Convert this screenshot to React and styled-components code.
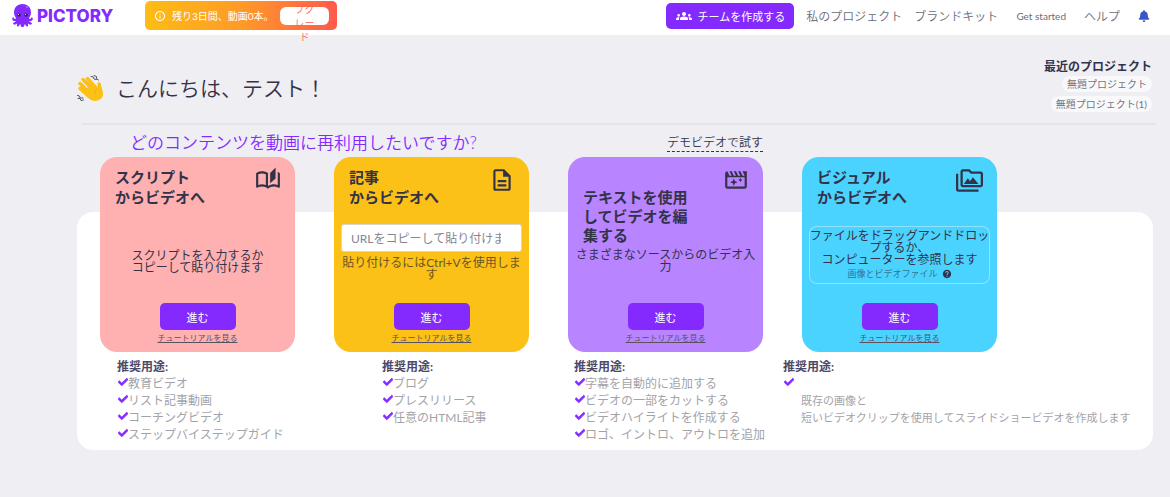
import styled, { createGlobalStyle } from 'styled-components';
import {
  MdGroups,
  MdOutlineInfo,
  MdOutlineAutoStories,
  MdHelp,
} from 'react-icons/md';
import { FaBell, FaCheck } from 'react-icons/fa';

const GlobalStyle = createGlobalStyle`
  * {
    box-sizing: border-box;
  }
  body {
    margin: 0;
    background: #efeef3;
    color: #343248;
    font-family: Lato, 'Noto Sans CJK JP', sans-serif;
    font-size: 12px;
  }
  button, input {
    font-family: inherit;
  }
  a {
    color: inherit;
    text-decoration: none;
  }
  h1, h2, h3, h4, p, ul {
    margin: 0;
    padding: 0;
  }
`;

const Header = styled.header`
  display: flex;
  align-items: center;
  height: 35px;
  padding: 0 20px 4px 12px;
  background: #fff;
`;

const Logo = styled.a`
  display: flex;
  align-items: center;
  gap: 4px;
  width: 133px;
  color: #842aff;
  font-family: Inter, sans-serif;
  font-size: 17px;
  font-weight: 800;
  line-height: 24px;
`;

const TrialBanner = styled.div`
  display: flex;
  align-items: center;
  height: 29px;
  width: 192px;
  padding: 0 8px 0 9px;
  border-radius: 5px;
  background: linear-gradient(90deg, #fcbd14, #ff9a28 50%, #ff5a4c);
  color: #fff;
  font-size: 10px;
  svg {
    margin-right: 6px;
  }
`;

const UpgradeButton = styled.button`
  display: flex;
  justify-content: center;
  align-items: center;
  width: 49px;
  height: 18px;
  margin-left: auto;
  padding: 0;
  border: 0;
  border-radius: 6px;
  background: #fff;
  color: #ff5f4c;
  font-size: 10px;
  font-weight: 350;
  line-height: 14px;
  white-space: pre;
`;

const Nav = styled.nav`
  display: flex;
  align-items: center;
  margin-left: auto;
  color: #6c6c76;
  white-space: nowrap;
`;

const TeamButton = styled.button`
  display: flex;
  align-items: center;
  justify-content: center;
  gap: 6px;
  height: 26px;
  width: 128px;
  margin-right: 12px;
  padding: 0;
  border: 0;
  border-radius: 5px;
  background: #842aff;
  color: #fff;
  font-size: 11px;
`;

const NavLink = styled.a`
  margin-right: ${(p) => p.$gap || 18}px;
  font-size: ${(p) => (p.$small ? 10 : 12)}px;
  font-weight: ${(p) => (p.$small ? 400 : 350)};
`;

const Main = styled.main`
  padding: 22px 14px 0 77px;
`;

const Greeting = styled.div`
  display: flex;
  align-items: flex-start;
  justify-content: space-between;
  height: 66px;
`;

const Hello = styled.h1`
  display: flex;
  align-items: center;
  gap: 12px;
  padding-top: 15px;
  font-size: 21px;
  font-weight: 350;
  line-height: 32px;
`;

const Recent = styled.div`
  display: flex;
  flex-direction: column;
  align-items: flex-end;
  padding: 1px 4px 0 0;
`;

const RecentTitle = styled.h4`
  font-size: 12px;
  line-height: 18px;
`;

const RecentItem = styled.a`
  margin-bottom: 4px;
  padding: 0 5px;
  border-radius: 8px;
  background: #f9f9fb;
  color: #75757f;
  font-size: 10px;
  line-height: 16px;
`;

const Divider = styled.hr`
  height: 2px;
  margin: 0 0 0 5px;
  border: 0;
  background: #e5e4ea;
`;

const Question = styled.div`
  display: flex;
  align-items: center;
  justify-content: space-between;
  height: 32px;
  padding: 4px 393px 0 53px;
`;

const QuestionTitle = styled.h2`
  color: #842aff;
  font-size: 17px;
  font-weight: 350;
  line-height: 26px;
  white-space: nowrap;
`;

const DemoLink = styled.a`
  border-bottom: 1px dashed #343248;
  font-weight: 350;
  line-height: 17px;
  white-space: nowrap;
`;

const Panel = styled.section`
  margin: 55px 3px 0 0;
  padding-bottom: 7px;
  border-radius: 16px;
  background: #fff;
`;

const Cards = styled.div`
  display: grid;
  grid-template-columns: repeat(4, minmax(0, 1fr));
  gap: 39px;
  padding: 0 156px 0 23px;
`;

const Card = styled.article`
  display: flex;
  flex-direction: column;
  height: 195px;
  margin-top: -55px;
  padding: 0 7px 8px;
  border-radius: 17px;
  background: ${(p) => p.$color};
`;

const CardHead = styled.div`
  display: flex;
  justify-content: space-between;
  align-items: flex-start;
  height: ${(p) => (p.$tall ? 92 : 67)}px;
  padding: 10px 7px 0 8px;
`;

const CardTitle = styled.h3`
  width: 105px;
  padding-top: ${(p) => (p.$tall ? 21 : 0)}px;
  font-size: 15px;
  line-height: ${(p) => (p.$tall ? 19 : 20)}px;
`;

const CardBody = styled.div`
  display: flex;
  flex: 1;
  flex-direction: column;
  text-align: center;
  line-height: 12px;
`;

const CardText = styled.p`
  padding-top: ${(p) => p.$top || 0}px;
  color: ${(p) => (p.$muted ? '#6b5628' : '#343248')};
  white-space: pre-line;
`;

const UrlInput = styled.input`
  width: 100%;
  height: 28px;
  padding: 0 20px 0 9px;
  border: 1px solid #d9d6cc;
  border-radius: 3px;
  background: #fff;
  font-size: 12px;
  &::placeholder {
    color: #85858f;
  }
`;

const DropZone = styled.div`
  height: 58px;
  margin-top: 2px;
  padding-top: 4px;
  border-radius: 8px;
  box-shadow: inset 0 0 0 1px #8fe3ff;
`;

const FileHint = styled.p`
  display: flex;
  align-items: center;
  justify-content: center;
  gap: 4px;
  padding-top: 2px;
  color: #2f7590;
  font-size: 9px;
  svg {
    color: #343248;
  }
`;

const CardFoot = styled.div`
  display: flex;
  flex-direction: column;
  align-items: center;
`;

const ProceedButton = styled.button`
  width: 76px;
  height: 27px;
  padding: 0;
  border: 0;
  border-radius: 5px;
  background: #842aff;
  color: #fff;
  font-size: 11px;
`;

const TutorialLink = styled.a`
  padding-top: 2px;
  color: #5a5060;
  font-size: 8px;
  line-height: 12px;
  text-decoration: underline;
`;

const Uses = styled.div`
  display: grid;
  grid-template-columns: 265fr 192fr 209fr 370fr;
  padding: 6px 0 0 40px;
`;

const UsesTitle = styled.h4`
  color: #4d4a68;
  font-size: 12px;
  line-height: 17px;
`;

const UsesList = styled.ul`
  list-style: none;
  color: #a4a3a9;
`;

const UsesItem = styled.li`
  display: flex;
  line-height: 17px;
  white-space: nowrap;
  svg {
    margin: 2px 0 0 1px;
    color: #842aff;
    stroke: #842aff;
    stroke-width: 36px;
  }
`;

const UsesNote = styled.p`
  padding: 17px 0 0 7px;
  font-size: 11px;
  white-space: pre-line;
`;

function Octopus() {
  return (
    <svg width='21' height='23' viewBox='0 0 42 46'>
      <path
        fill='#842aff'
        d='M21 0C10 0 4 8 4 17c0 6 3 9 4 12-2 2-5 0-5-3-3 1-3 4-2 6 2 3 6 2 7 3-2 2-5 1-6 4 1 3 5 3 8 0 1 2-2 4 1 6 3 1 4-3 5-5 2 1 0 6 5 6s3-5 5-6c1 2 2 6 5 5 3-2 0-4 1-6 3 3 7 3 8 0-1-3-4-2-6-4 1-1 5 0 7-3 1-2 1-5-2-6 0 3-3 5-5 3 1-3 4-6 4-12C38 8 32 0 21 0z'
      />
      <circle cx='14' cy='22' r='3.5' fill='#3a1a78' />
      <circle cx='28' cy='22' r='3.5' fill='#3a1a78' />
      <circle cx='13' cy='21' r='1' fill='#fff' />
      <circle cx='27' cy='21' r='1' fill='#fff' />
      <circle cx='30' cy='6' r='2' fill='#a873ff' />
    </svg>
  );
}

function WavingHand() {
  return (
    <svg width='27' height='27' viewBox='0 0 54 54'>
      <path
        d='M6 17 23 35M12 9 31 29M21 7 37 25M6 27 23 42'
        stroke='#fbc116'
        strokeWidth='7'
        strokeLinecap='round'
      />
      <path
        fill='#fbc116'
        d='M12 31 32 17l8 9c2-5 0-10 3-12 4-1 5 4 6 10 2 8 5 14 1 21-5 7-15 9-22 5-6-3-12-10-16-19z'
      />
      <path
        d='M10 17 20 28M18 11 28 22M8 24 17 33M40 26c-4 4-5 8-3 12'
        stroke='#eda810'
        strokeWidth='1.2'
        fill='none'
      />
      <path
        d='M28 3l5 1 1 4 5 1M34 1l5 2 0 4 4 3M1 41l4 1 1 4 6 0M2 47l4 0 2 4 5-1'
        stroke='#4c5966'
        strokeWidth='2'
        fill='none'
        strokeLinecap='round'
        strokeLinejoin='round'
      />
    </svg>
  );
}

function ArticleIcon() {
  return (
    <svg width='26' height='26' viewBox='0 0 24 24' fill='currentColor'>
      <path d='M8 16h8v2H8zm0-4h8v2H8zm6-10H6c-1.1 0-2 .9-2 2v16c0 1.1.9 2 2 2h12c1.1 0 2-.9 2-2V8l-6-6zm4 18H6V4h7v5h5v11z' />
    </svg>
  );
}

function MovieIcon() {
  return (
    <svg width='26' height='26' viewBox='0 0 24 24' fill='currentColor'>
      <path d='M18 4l2 4h-2l-2-4h-2l2 4h-2l-2-4h-2l2 4h-2L8 4H6l2 4H6L4 4c-1.1 0-2 .9-2 2v12c0 1.1.9 2 2 2h16c1.1 0 2-.9 2-2V4h-4zm2 14H4V9.500h16V18z' />
      <path d='M10 10.500l1 2.500 2.500 1-2.500 1-1 2.500-1-2.500-2.500-1 2.500-1zM16 10l.6 1.400 1.400.6-1.400.6-.6 1.400-.6-1.400-1.400-.6 1.400-.6z' />
    </svg>
  );
}

function MediaIcon() {
  return (
    <svg width='27' height='27' viewBox='0 0 24 24' fill='currentColor'>
      <path d='M2 6H0v14c0 1.100.9 2 2 2h18v-2H2V6zm20-2h-8l-2-2H6c-1.100 0-1.990.9-1.990 2L4 16c0 1.100.9 2 2 2h16c1.100 0 2-.9 2-2V6c0-1.100-.9-2-2-2zm0 12H6V4h5.170l2 2H22v10zM7 15l3.500-5 2 2.700L15 9l5 6z' />
    </svg>
  );
}

const uses = [
  ['教育ビデオ', 'リスト記事動画', 'コーチングビデオ', 'ステップバイステップガイド'],
  ['ブログ', 'プレスリリース', '任意のHTML記事'],
  [
    '字幕を自動的に追加する',
    'ビデオの一部をカットする',
    'ビデオハイライトを作成する',
    'ロゴ、イントロ、アウトロを追加',
  ],
];

function SourceCard({ color, title, icon, tall, children }) {
  return (
    <Card $color={color}>
      <CardHead $tall={tall}>
        <CardTitle $tall={tall}>{title}</CardTitle>
        {icon}
      </CardHead>
      <CardBody>{children}</CardBody>
      <CardFoot>
        <ProceedButton type='button'>進む</ProceedButton>
        <TutorialLink href='#tutorial'>チュートリアルを見る</TutorialLink>
      </CardFoot>
    </Card>
  );
}

function App() {
  return (
    <>
      <GlobalStyle />
      <Header>
        <Logo href='#home'>
          <Octopus />
          PICTORY
        </Logo>
        <TrialBanner>
          <MdOutlineInfo size={12} />
          残り3日間、動画0本。
          <UpgradeButton type='button'>{'\nプグ\nレー\nド'}</UpgradeButton>
        </TrialBanner>
        <Nav>
          <TeamButton type='button'>
            <MdGroups size={16} />
            チームを作成する
          </TeamButton>
          <NavLink href='#projects' $gap={12}>
            私のプロジェクト
          </NavLink>
          <NavLink href='#brand'>ブランドキット</NavLink>
          <NavLink href='#start' $small>
            Get started
          </NavLink>
          <NavLink href='#help'>ヘルプ</NavLink>
          <FaBell size={12} color='#3a55c4' />
        </Nav>
      </Header>
      <Main>
        <Greeting>
          <Hello>
            <WavingHand />
            こんにちは、テスト！
          </Hello>
          <Recent>
            <RecentTitle>最近のプロジェクト</RecentTitle>
            <RecentItem href='#p0'>無題プロジェクト</RecentItem>
            <RecentItem href='#p1'>無題プロジェクト(1)</RecentItem>
          </Recent>
        </Greeting>
        <Divider />
        <Question>
          <QuestionTitle>どのコンテンツを動画に再利用したいですか?</QuestionTitle>
          <DemoLink href='#demo'>デモビデオで試す</DemoLink>
        </Question>
        <Panel>
          <Cards>
            <SourceCard
              color='#ffb1b1'
              title={<>スクリプト<br />からビデオへ</>}
              icon={<MdOutlineAutoStories size={26} />}
            >
              <CardText $top={26}>{'スクリプトを入力するか\nコピーして貼り付けます'}</CardText>
            </SourceCard>
            <SourceCard
              color='#fbc116'
              title={<>記事<br />からビデオへ</>}
              icon={<ArticleIcon />}
            >
              <UrlInput
                aria-label='URL'
                placeholder='URLをコピーして貼り付けます'
              />
              <CardText $top={5} $muted>
                貼り付けるにはCtrl+Vを使用します
              </CardText>
            </SourceCard>
            <SourceCard
              color='#b884ff'
              title='テキストを使用してビデオを編集する'
              icon={<MovieIcon />}
              tall
            >
              <CardText>さまざまなソースからのビデオ入力</CardText>
            </SourceCard>
            <SourceCard
              color='#4bd3ff'
              title={<>ビジュアル<br />からビデオへ</>}
              icon={<MediaIcon />}
            >
              <DropZone>
                <CardText>
                  {'ファイルをドラッグアンドドロップするか、\nコンピューターを参照します'}
                </CardText>
                <FileHint>
                  画像とビデオファイル <MdHelp size={10} />
                </FileHint>
              </DropZone>
            </SourceCard>
          </Cards>
          <Uses>
            {uses.map((items) => (
              <div key={items[0]}>
                <UsesTitle>推奨用途:</UsesTitle>
                <UsesList>
                  {items.map((item) => (
                    <UsesItem key={item}>
                      <FaCheck size={10} />
                      {item}
                    </UsesItem>
                  ))}
                </UsesList>
              </div>
            ))}
            <div>
              <UsesTitle>推奨用途:</UsesTitle>
              <UsesList>
                <UsesItem>
                  <FaCheck size={10} />
                  <UsesNote>
                    {'既存の画像と\n短いビデオクリップを使用してスライドショービデオを作成します'}
                  </UsesNote>
                </UsesItem>
              </UsesList>
            </div>
          </Uses>
        </Panel>
      </Main>
    </>
  );
}

export default App;
